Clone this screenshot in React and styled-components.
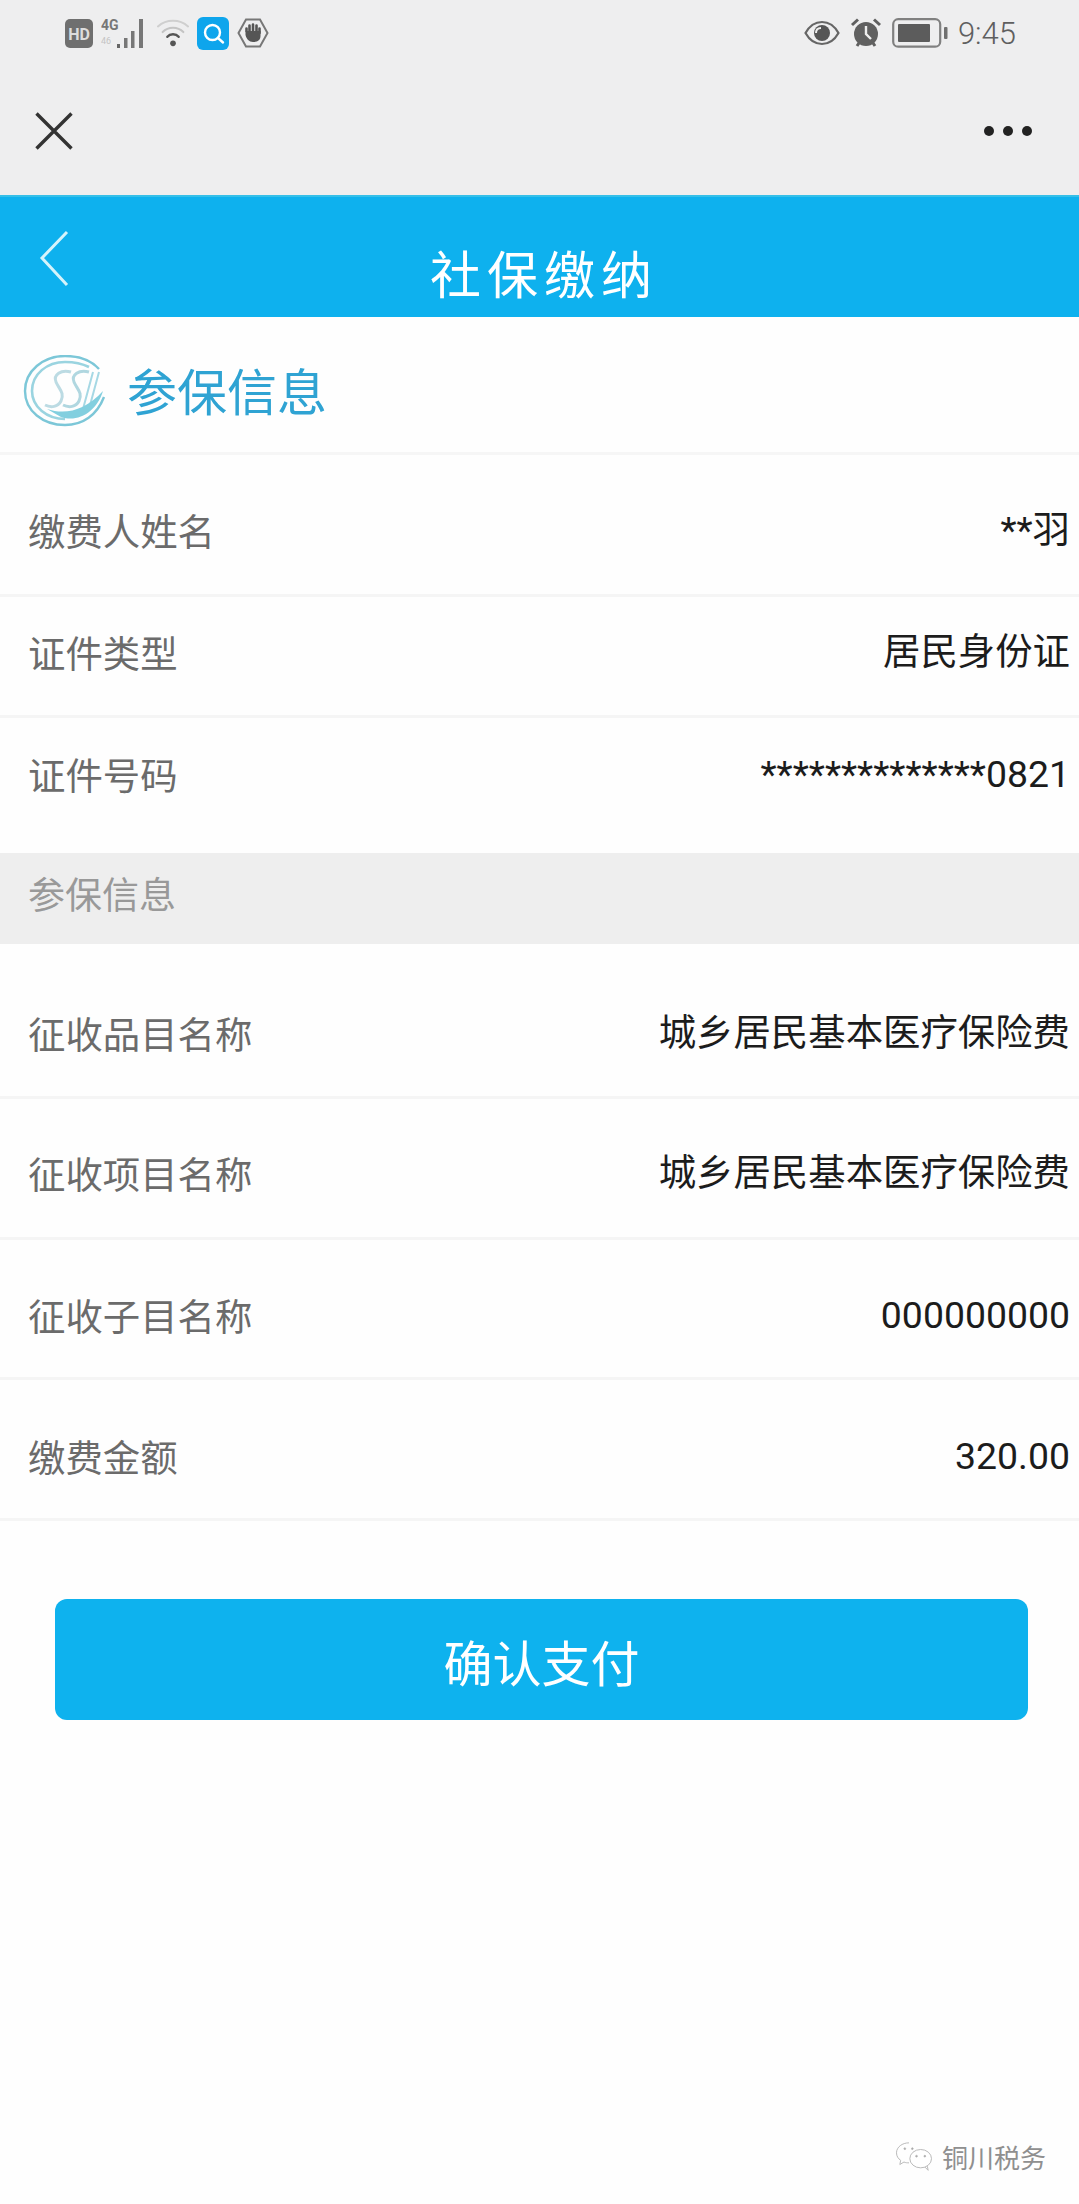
import React from "react";
import styled, { createGlobalStyle } from "styled-components";

const GlobalStyle = createGlobalStyle`
  html, body {
    margin: 0;
    padding: 0;
    background: #fff;
    font-family: "Roboto", "Noto Sans CJK SC", sans-serif;
  }
  * { box-sizing: border-box; }
`;

const CJK = `"Noto Sans CJK SC", sans-serif`;

const Page = styled.div`
  width: 1079px;
  height: 2204px;
  background: #fefefe;
  overflow: hidden;
  display: flex;
  flex-direction: column;
`;

const TopArea = styled.div`
  height: 195px;
  background: #eeeeef;
  display: flex;
  flex-direction: column;
`;

const StatusBar = styled.div`
  height: 66px;
  padding: 16px 63px 0 65px;
  display: flex;
  align-items: flex-start;
  justify-content: space-between;
`;

const StatusGroup = styled.div`
  display: flex;
  align-items: center;
  height: 34px;
  gap: ${(p) => p.$gap}px;
`;

const Clock = styled.span`
  font-family: "Roboto", sans-serif;
  font-size: 31px;
  font-weight: 300;
  color: #5f5f5f;
`;

const NavRow = styled.div`
  flex: 1;
  padding: 0 47px 0 35px;
  display: flex;
  align-items: center;
  justify-content: space-between;
`;

const Dots = styled.div`
  display: flex;
  gap: 9px;
`;

const Dot = styled.i`
  width: 10px;
  height: 10px;
  border-radius: 50%;
  background: #222;
`;

const Header = styled.header`
  height: 122px;
  background: #0eb1ee;
  border-top: 2px solid #35bfe8;
  display: flex;
  align-items: center;
  justify-content: center;
  position: relative;
`;

const BackIcon = styled.svg`
  position: absolute;
  left: 39px;
  top: 32px;
`;

const Title = styled.h1`
  margin: 30px 0 0 9px;
  font-family: ${CJK};
  font-size: 51px;
  font-weight: 400;
  letter-spacing: 6px;
  line-height: 70px;
  color: #fff;
`;

const InfoHead = styled.div`
  height: 138px;
  padding: 12px 0 0 23px;
  display: flex;
  align-items: center;
  gap: 20px;
  border-bottom: 3px solid #f6f6f6;
`;

const InfoTitle = styled.h2`
  margin: -4px 0 0;
  font-family: ${CJK};
  font-size: 50px;
  font-weight: 400;
  color: #2fa3d3;
`;

const Row = styled.div`
  height: ${(p) => p.$h}px;
  padding: ${(p) => p.$top}px 9px 0 28px;
  display: flex;
  align-items: flex-start;
  justify-content: space-between;
  border-bottom: ${(p) => (p.$last ? "none" : "3px solid #f5f5f5")};
  font-size: 37.4px;
  line-height: 54px;
`;

const Label = styled.span`
  font-family: ${CJK};
  color: #6b6b6b;
`;

const Value = styled.span`
  font-family: "Roboto", ${CJK};
  color: #1c1c1c;
`;

const Band = styled.div`
  height: 91px;
  padding: 0 0 11px 28px;
  display: flex;
  align-items: center;
  background: #eeeeee;
  font-family: ${CJK};
  font-size: 37px;
  color: #999;
`;

const Spacer = styled.div`
  height: ${(p) => p.$h}px;
`;

const PayButton = styled.button`
  display: block;
  width: 973px;
  height: 121px;
  margin: 0 0 0 55px;
  border: none;
  border-radius: 12px;
  background: #0eb2ee;
  color: #fff;
  font-family: ${CJK};
  font-size: 49px;
  padding-top: 2px;
`;

const Watermark = styled.div`
  margin-top: auto;
  margin-bottom: 29px;
  padding-right: 33px;
  display: flex;
  justify-content: flex-end;
  align-items: center;
  gap: 8px;
  font-family: ${CJK};
  font-size: 26px;
  color: #8f8f8f;
`;

const HdIcon = () => (
  <svg width="28" height="29" viewBox="0 0 28 29">
    <rect width="28" height="29" rx="5" fill="#6f6f6f" />
    <text x="14" y="20.5" textAnchor="middle" fontFamily="Roboto" fontWeight="700" fontSize="16" fill="#ddd">HD</text>
  </svg>
);

const SignalIcon = () => (
  <svg width="48" height="32" viewBox="0 0 48 32">
    <text x="0" y="13" fontFamily="Roboto" fontWeight="700" fontSize="14" fill="#777">4G</text>
    <text x="0" y="27" fontFamily="Roboto" fontSize="9" fill="#c4c4c4">46</text>
    <rect x="16" y="27" width="3" height="4" fill="#666" />
    <rect x="23" y="21" width="3.5" height="10" fill="#777" />
    <rect x="30" y="14" width="3.5" height="17" fill="#777" />
    <rect x="38" y="2" width="4" height="29" fill="#777" />
  </svg>
);

const WifiIcon = () => (
  <svg width="32" height="32" viewBox="0 0 34 32" fill="none" strokeLinecap="round">
    <path d="M1 9C10 1 24 1 33 9" stroke="#cfcfcf" strokeWidth="2.2" />
    <path d="M6 15C12 9 22 9 28 15" stroke="#c4c4c4" strokeWidth="2.2" />
    <path d="M11 20C14 16.5 20 16.5 23 20" stroke="#555" strokeWidth="2.6" />
    <circle cx="17" cy="27" r="3" fill="#555" />
  </svg>
);

const SearchBadge = () => (
  <svg width="32" height="33" viewBox="0 0 32 33" fill="none">
    <rect width="32" height="33" rx="6" fill="#0ea5ec" />
    <circle cx="15.5" cy="15.5" r="7.5" stroke="#fff" strokeWidth="2.4" />
    <path d="M21 21L26 25.5" stroke="#fff" strokeWidth="2.4" strokeLinecap="round" />
  </svg>
);

const HandIcon = () => (
  <svg width="32" height="32" viewBox="0 0 32 32" fill="none">
    <path d="M9 2.5H23L30.5 16L23 29.5H9L1.5 16Z" stroke="#777" strokeWidth="2" />
    <path d="M9.5 14V11.5M12.5 14V8.5M16 14V7.5M19.5 14V8.5M22.5 16V11.5" stroke="#555" strokeWidth="2.6" strokeLinecap="round" />
    <path d="M8.5 14H23.5V19C23.5 23 20.5 25 16 25C12 25 9.5 22 8.5 18Z" fill="#555" />
  </svg>
);

const EyeIcon = () => (
  <svg width="36" height="26" viewBox="0 0 36 26" fill="none">
    <path d="M1.5 13C6 5 12 2 18 2C24 2 30 5 34.5 13C30 21 24 24 18 24C12 24 6 21 1.5 13Z" stroke="#666" strokeWidth="2.2" />
    <circle cx="18" cy="13" r="8" fill="#555" />
    <path d="M12 13C12 9.5 14.5 8 17 8" stroke="#eee" strokeWidth="2" />
  </svg>
);

const AlarmIcon = () => (
  <svg width="32" height="32" viewBox="0 0 32 32" fill="none">
    <circle cx="16" cy="17" r="12" fill="#606060" />
    <path d="M16 9V17L21 22" stroke="#eee" strokeWidth="2.4" />
    <path d="M2 8L8 2.5M30 8L24 2.5" stroke="#606060" strokeWidth="3" />
    <path d="M7 29L9 26M25 29L23 26" stroke="#606060" strokeWidth="3" />
  </svg>
);

const BatteryIcon = () => (
  <svg width="56" height="32" viewBox="0 0 56 32" fill="none">
    <rect x="1.2" y="2.2" width="47" height="27.5" rx="5" stroke="#808080" strokeWidth="2.2" />
    <rect x="6" y="7" width="32" height="18" rx="1" fill="#5c5c5c" />
    <rect x="52" y="10" width="3.5" height="12" rx="1" fill="#707070" />
  </svg>
);

const CloseIcon = () => (
  <svg width="38" height="38" viewBox="0 0 38 38" fill="none">
    <path d="M1.5 1.5L36.5 36.5M36.5 1.5L1.5 36.5" stroke="#333" strokeWidth="3.4" />
  </svg>
);

// the social security "SI" mark: open double ring, slanted S and I, swoosh under them
const SiLogo = () => (
  <svg width="84" height="72" viewBox="0 0 84 72" fill="none">
    <path d="M76 14C68 5 55 1 42 1C20 1 2 16 2 36C2 56 20 70 42 70C60 70 74 60 81 42" stroke="#7cc7d8" strokeWidth="2.4" />
    <path d="M66 12C58 8 50 7 42 7C24 7 9 19 9 36C9 52 24 64 42 64" stroke="#9ad4e0" strokeWidth="2.6" />
    <path d="M48 17C38 14 30 20 33 27C36 34 42 38 38 46C35 52 28 53 22 50" stroke="#bcdbe3" strokeWidth="3" />
    <path d="M66 17C56 14 48 20 51 27C54 34 60 38 56 46C53 52 46 53 40 50" stroke="#b0d7e0" strokeWidth="3" />
    <path d="M76 17L66 54M70 17L60 54" stroke="#a6d8e4" strokeWidth="2" />
    <path d="M24 54C42 60 62 56 80 36C74 56 56 68 38 62Z" fill="#82cfdf" />
  </svg>
);

const WechatIcon = () => (
  <svg width="40" height="30" viewBox="0 0 44 36" fill="none" stroke="#bbb" strokeWidth="1.2">
    <path d="M16 1C8 1 1 6 1 13C1 17 3 20 6 22L5 27L10 24C12 25 14 25 16 25" />
    <ellipse cx="30" cy="20" rx="13" ry="11" fill="#fff" />
    <path d="M35 30L39 34L38 29" />
    <circle cx="11" cy="8" r="1" fill="#999" />
    <circle cx="20" cy="8" r="1" fill="#999" />
    <circle cx="25" cy="17" r="1" fill="#999" />
    <circle cx="35" cy="17" r="1" fill="#999" />
  </svg>
);

const personRows = [
  { label: "缴费人姓名", value: "**羽", h: 142, top: 48 },
  { label: "证件类型", value: "居民身份证", h: 121, top: 28 },
  { label: "证件号码", value: "**************0821", h: 135, top: 29, last: true },
];

const itemRows = [
  { label: "征收品目名称", value: "城乡居民基本医疗保险费", h: 155, top: 62 },
  { label: "征收项目名称", value: "城乡居民基本医疗保险费", h: 141, top: 47 },
  { label: "征收子目名称", value: "000000000", h: 140, top: 48 },
  { label: "缴费金额", value: "320.00", h: 141, top: 49 },
];

const InfoRow = ({ label, value, h, top, last }) => (
  <Row $h={h} $top={top} $last={last}>
    <Label>{label}</Label>
    <Value>{value}</Value>
  </Row>
);

export default function App() {
  return (
    <Page>
      <GlobalStyle />
      <TopArea>
        <StatusBar>
          <StatusGroup $gap={8}>
            <HdIcon />
            <SignalIcon />
            <WifiIcon />
            <SearchBadge />
            <HandIcon />
          </StatusGroup>
          <StatusGroup $gap={10}>
            <EyeIcon />
            <AlarmIcon />
            <BatteryIcon />
            <Clock>9:45</Clock>
          </StatusGroup>
        </StatusBar>
        <NavRow>
          <CloseIcon />
          <Dots>
            <Dot />
            <Dot />
            <Dot />
          </Dots>
        </NavRow>
      </TopArea>
      <Header>
        <BackIcon width="32" height="60" viewBox="0 0 32 60" fill="none">
          <path d="M28 3L3 29L28 56" stroke="#d5f3fb" strokeWidth="3" />
        </BackIcon>
        <Title>社保缴纳</Title>
      </Header>
      <InfoHead>
        <SiLogo />
        <InfoTitle>参保信息</InfoTitle>
      </InfoHead>
      {personRows.map((row) => (
        <InfoRow key={row.label} {...row} />
      ))}
      <Band>参保信息</Band>
      {itemRows.map((row) => (
        <InfoRow key={row.label} {...row} />
      ))}
      <Spacer $h={78} />
      <PayButton>确认支付</PayButton>
      <Watermark>
        <WechatIcon />
        铜川税务
      </Watermark>
    </Page>
  );
}
